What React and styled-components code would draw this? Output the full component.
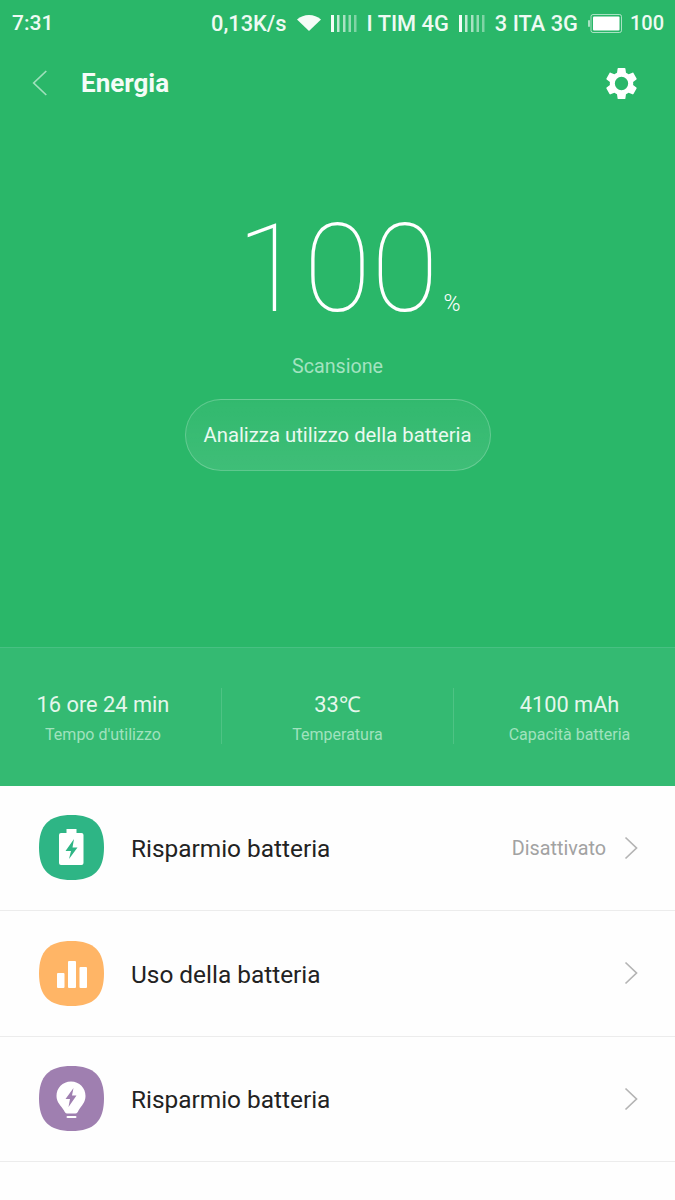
import React from 'react';
import styled, { createGlobalStyle } from 'styled-components';

const GlobalStyle = createGlobalStyle`
    html, body {
        margin: 0;
        padding: 0;
        background: #fff;
    }
    * {
        box-sizing: border-box;
    }
`;

const Page = styled.div`
    width: 675px;
    height: 1200px;
    overflow: hidden;
    font-family: Roboto, "Liberation Sans", sans-serif;
    background: #fefefe;
`;

const GreenArea = styled.div`
    background: #2ab769;
    color: #fff;
`;

const StatusBar = styled.div`
    height: 46px;
    padding: 0 11px 0 12px;
    display: flex;
    align-items: center;
    font-weight: 500;
    color: #eefaf3;
`;

const Clock = styled.span`
    margin-right: auto;
    font-size: 21px;
`;

const StatusText = styled.span`
    margin-left: ${(p) => p.$gap || 0}px;
    font-size: ${(p) => p.$size || 21.8}px;
    white-space: nowrap;
`;

const StatusIcon = styled.svg`
    display: block;
    flex: none;
    margin-left: ${(p) => p.$gap || 0}px;
`;

const NavBar = styled.div`
    height: 74px;
    padding: 0 34px 0 32px;
    display: flex;
    align-items: center;
`;

const Title = styled.h1`
    margin: 0 auto 0 33px;
    font-size: 26px;
    font-weight: 700;
    color: #f4fcf7;
`;

const Hero = styled.div`
    height: 527px;
    padding-top: 74px;
    display: flex;
    flex-direction: column;
    align-items: center;
`;

const BigNumber = styled.div`
    position: relative;
    font-size: 123px;
    font-weight: 100;
    line-height: 150px;
    letter-spacing: 0;
`;

const Percent = styled.span`
    position: absolute;
    left: 100%;
    bottom: 28px;
    margin-left: 5px;
    font-size: 23px;
    font-weight: 300;
    line-height: 24px;
`;

const ScanLabel = styled.div`
    margin-top: 11px;
    font-size: 19.7px;
    line-height: 24px;
    color: #a3e3c0;
`;

const AnalyzeButton = styled.div`
    margin-top: 20px;
    width: 306px;
    height: 72px;
    border-radius: 36px;
    border: 1px solid rgba(255, 255, 255, 0.22);
    background: linear-gradient(180deg, rgba(255, 255, 255, 0.04), rgba(255, 255, 255, 0.1));
    display: flex;
    align-items: center;
    justify-content: center;
    font-size: 20.3px;
    color: #eaf9f0;
`;

const StatsBand = styled.div`
    height: 138.5px;
    padding-top: 40px;
    display: grid;
    grid-template-columns: 221px 232px 1fr;
    align-items: start;
    background: #34ba72;
    border-top: 1px solid #47c082;
`;

const Stat = styled.div`
    height: 56px;
    padding: ${(p) => p.$inset || '0'};
    display: flex;
    flex-direction: column;
    align-items: center;
    border-left: ${(p) => (p.$divided ? '1px solid rgba(255, 255, 255, 0.13)' : 'none')};
`;

const StatValue = styled.div`
    font-size: 21.8px;
    line-height: 34px;
    white-space: nowrap;
    color: #e4f7ec;
`;

const StatLabel = styled.div`
    margin-top: 2px;
    font-size: 16px;
    line-height: 22px;
    white-space: nowrap;
    color: #a0e2be;
`;

const Row = styled.div`
    height: 125.5px;
    padding: 0 37px 0 39px;
    display: flex;
    align-items: center;
    border-bottom: 1px solid #ececec;
`;

const IconBox = styled.svg`
    display: block;
    flex: none;
    margin-right: 27px;
`;

const RowTitle = styled.div`
    margin-right: auto;
    padding-top: 2px;
    font-size: 24.4px;
    color: #222;
`;

const RowValue = styled.div`
    margin-right: 18px;
    padding-top: 2px;
    font-size: 19.8px;
    color: #a2a2a2;
`;

const ChevronIcon = styled.svg`
    display: block;
    flex: none;
`;

const SQUIRCLE = 'M32.5 0C55 0 65 10 65 32.5C65 55 55 65 32.5 65C10 65 0 55 0 32.5C0 10 10 0 32.5 0Z';
const GEAR =
    'M19.14 12.94c.04-.3.06-.61.06-.94 0-.32-.02-.64-.07-.94l2.03-1.58c.18-.14.23-.41.12-.61l-1.92-3.32c-.12-.22-.37-.29-.59-.22l-2.39.96c-.5-.38-1.03-.7-1.62-.94l-.36-2.54c-.04-.24-.24-.41-.48-.41h-3.84c-.24 0-.43.17-.47.41l-.36 2.54c-.59.24-1.13.57-1.62.94l-2.39-.96c-.22-.08-.47 0-.59.22L2.74 8.87c-.12.21-.08.47.12.61l2.03 1.58c-.05.3-.09.63-.09.94s.02.64.07.94l-2.03 1.58c-.18.14-.23.41-.12.61l1.92 3.32c.12.22.37.29.59.22l2.39-.96c.5.38 1.03.7 1.62.94l.36 2.54c.05.24.24.41.48.41h3.84c.24 0 .44-.17.47-.41l.36-2.54c.59-.24 1.13-.56 1.62-.94l2.39.96c.22.08.47 0 .59-.22l1.92-3.32c.12-.22.07-.47-.12-.61l-2.01-1.58zM12 16.1a4.1 4.1 0 1 1 0-8.2 4.1 4.1 0 0 1 0 8.2z';

const Signal = ({ gap }) => (
    <StatusIcon $gap={gap} width="26" height="17" viewBox="0 0 26 17">
        <rect x="0" y="0" width="3" height="17" fill="#fff" opacity="0.95" />
        <rect x="6" y="0" width="2.5" height="17" fill="#fff" opacity="0.7" />
        <rect x="12" y="0" width="2.5" height="17" fill="#fff" opacity="0.6" />
        <rect x="17.5" y="0" width="2.5" height="17" fill="#fff" opacity="0.5" />
        <rect x="23" y="0" width="2.5" height="17" fill="#fff" opacity="0.4" />
    </StatusIcon>
);

const Chevron = ({ color, width, height, strokeWidth, back }) => (
    <ChevronIcon width={width} height={height} viewBox="0 0 14 24">
        <path
            d={back ? 'M12.5 1.5L1.5 12L12.5 22.5' : 'M1.5 1.5L12.5 12L1.5 22.5'}
            fill="none"
            stroke={color}
            strokeWidth={strokeWidth}
        />
    </ChevronIcon>
);

const BatteryIcon = () => (
    <IconBox width="65" height="65" viewBox="0 0 65 65">
        <path d={SQUIRCLE} fill="#2eb585" />
        <path d="M27.500 14h10v4h5a2 2 0 0 1 2 2V48a2 2 0 0 1-2 2H22a2 2 0 0 1-2-2V20a2 2 0 0 1 2-2h5.500z" fill="#fff" />
        <path d="M35 24L26.500 36H32L30 44L38.500 32.500H33.500z" fill="#2eb585" />
    </IconBox>
);

const UsageIcon = () => (
    <IconBox width="65" height="65" viewBox="0 0 65 65">
        <path d={SQUIRCLE} fill="#ffb566" />
        <rect x="18" y="32" width="7.500" height="15" rx="1" fill="#fff" />
        <rect x="29" y="20" width="8" height="27" rx="1" fill="#fff" />
        <rect x="40.500" y="26" width="7.500" height="21" rx="1" fill="#fff" />
    </IconBox>
);

const BulbIcon = () => (
    <IconBox width="65" height="65" viewBox="0 0 65 65">
        <path d={SQUIRCLE} fill="#9f7fb0" />
        <path d="M32 15.500C23.500 15.500 17.500 22 17.500 30C17.500 36.500 22 39.500 25 44.500C25.500 46 26.500 47.500 28 47.500H36.500C38 47.500 39 46 39.500 44.500C42.500 39.500 46.500 36.500 46.500 30C46.500 22 40.500 15.500 32 15.500Z" fill="#fff" />
        <rect x="27.500" y="50" width="10" height="2" rx="1" fill="#fff" />
        <path d="M34.500 22L26.500 33H31L29.500 41L37.500 29.500H33z" fill="#9f7fb0" />
    </IconBox>
);

const rows = [
    { title: 'Risparmio batteria', value: 'Disattivato', Icon: BatteryIcon },
    { title: 'Uso della batteria', Icon: UsageIcon },
    { title: 'Risparmio batteria', Icon: BulbIcon },
];

const stats = [
    { value: '16 ore 24 min', label: "Tempo d'utilizzo", inset: '0 15px 0 0' },
    { value: '33℃', label: 'Temperatura' },
    { value: '4100 mAh', label: 'Capacità batteria', inset: '0 0 0 10px' },
];

const App = () => {
    return (
        <Page>
            <GlobalStyle />
            <GreenArea>
                <StatusBar>
                    <Clock>7:31</Clock>
                    <StatusText>0,13K/s</StatusText>
                    <StatusIcon $gap={10} width="24" height="16" viewBox="0 0 24 16">
                        <path d="M12 16L0 4.500C3.400 1.600 7.500 0 12 0S20.600 1.600 24 4.500z" fill="#f4fcf7" />
                    </StatusIcon>
                    <Signal gap={10} />
                    <StatusText $gap={10}>I TIM 4G</StatusText>
                    <Signal gap={10} />
                    <StatusText $gap={10}>3 ITA 3G</StatusText>
                    <StatusIcon $gap={10} width="34" height="19" viewBox="0 0 34 19">
                        <rect x="0" y="6" width="2" height="7" rx="1" fill="#fff" opacity="0.6" />
                        <rect x="3" y="0.500" width="30.500" height="18" rx="2" fill="none" stroke="#fff" strokeOpacity="0.6" />
                        <rect x="5" y="2.500" width="26.500" height="14" rx="1" fill="#fff" />
                    </StatusIcon>
                    <StatusText $gap={8} $size={20}>100</StatusText>
                </StatusBar>
                <NavBar>
                    <Chevron back color="#9fe0bc" width={16} height={30} strokeWidth={1.5} />
                    <Title>Energia</Title>
                    <svg width="39" height="39" viewBox="0 0 24 24" style={{ display: 'block' }}>
                        <path d={GEAR} fill="#fff" fillRule="evenodd" />
                    </svg>
                </NavBar>
                <Hero>
                    <BigNumber>
                        100
                        <Percent>%</Percent>
                    </BigNumber>
                    <ScanLabel>Scansione</ScanLabel>
                    <AnalyzeButton>Analizza utilizzo della batteria</AnalyzeButton>
                </Hero>
                <StatsBand>
                    {stats.map((stat, i) => (
                        <Stat key={stat.label} $divided={i > 0} $inset={stat.inset}>
                            <StatValue>{stat.value}</StatValue>
                            <StatLabel>{stat.label}</StatLabel>
                        </Stat>
                    ))}
                </StatsBand>
            </GreenArea>
            {rows.map(({ title, value, Icon }, i) => (
                <Row key={i}>
                    <Icon />
                    <RowTitle>{title}</RowTitle>
                    {value && <RowValue>{value}</RowValue>}
                    <Chevron color="#b4b4b4" width={14} height={24} strokeWidth={1.7} />
                </Row>
            ))}
        </Page>
    );
};

export default App;
